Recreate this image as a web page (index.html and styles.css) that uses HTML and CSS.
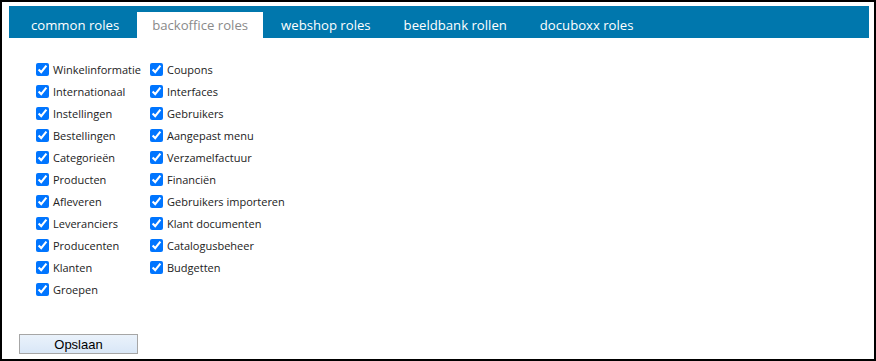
FILE: index.html
```html
<!DOCTYPE html>
<html lang="nl">
<head>
    <meta charset="UTF-8">
    <title>Rollen</title>
    <link rel="stylesheet" href="styles.css">
</head>
<body>
    <div class="frame">
        <!-- Tabs -->
        <div class="tab-bar">
            <div class="tab">common roles</div>
            <div class="tab active">backoffice roles</div>
            <div class="tab">webshop roles</div>
            <div class="tab">beeldbank rollen</div>
            <div class="tab">docuboxx roles</div>
        </div>

        <!-- Role list -->
        <div class="role-list">
            <div class="role-col first">
                <label class="role"><input type="checkbox" checked> Winkelinformatie</label>
                <label class="role"><input type="checkbox" checked> Internationaal</label>
                <label class="role"><input type="checkbox" checked> Instellingen</label>
                <label class="role"><input type="checkbox" checked> Bestellingen</label>
                <label class="role"><input type="checkbox" checked> Categorieën</label>
                <label class="role"><input type="checkbox" checked> Producten</label>
                <label class="role"><input type="checkbox" checked> Afleveren</label>
                <label class="role"><input type="checkbox" checked> Leveranciers</label>
                <label class="role"><input type="checkbox" checked> Producenten</label>
                <label class="role"><input type="checkbox" checked> Klanten</label>
                <label class="role"><input type="checkbox" checked> Groepen</label>
            </div>
            <div class="role-col">
                <label class="role"><input type="checkbox" checked> Coupons</label>
                <label class="role"><input type="checkbox" checked> Interfaces</label>
                <label class="role"><input type="checkbox" checked> Gebruikers</label>
                <label class="role"><input type="checkbox" checked> Aangepast menu</label>
                <label class="role"><input type="checkbox" checked> Verzamelfactuur</label>
                <label class="role"><input type="checkbox" checked> Financiën</label>
                <label class="role"><input type="checkbox" checked> Gebruikers importeren</label>
                <label class="role"><input type="checkbox" checked> Klant documenten</label>
                <label class="role"><input type="checkbox" checked> Catalogusbeheer</label>
                <label class="role"><input type="checkbox" checked> Budgetten</label>
            </div>
        </div>

        <button class="save-button">Opslaan</button>
    </div>
</body>
</html>
```

FILE: styles.css
```css
body {
    margin: 0;
    padding: 0;
    background: #ffffff;
    font-family: 'Open Sans', 'Noto Sans', sans-serif;
}

.frame {
    width: 876px;
    height: 361px;
    box-sizing: border-box;
    border: 2px solid #000000;
    padding: 4px 5px 0 7px;
}

.tab-bar {
    height: 32px;
    background: #0077ad;
    display: flex;
    align-items: flex-end;
    gap: 3px;
    padding-left: 7px;
}

.tab {
    height: 26px;
    padding: 0 15px;
    display: flex;
    align-items: center;
    color: #ffffff;
    font-size: 13.15px;
    white-space: nowrap;
}

.tab.active {
    background: #ffffff;
    color: #8a8a8a;
}

.role-list {
    display: flex;
    margin: 20px 0 0 27px;
}

.role-col {
    display: flex;
    flex-direction: column;
}

.role-col.first {
    width: 114px;
}

.role {
    height: 22px;
    display: flex;
    align-items: center;
    font-size: 11px;
    color: #222222;
    white-space: nowrap;
}

.role input {
    width: 13px;
    height: 13px;
    margin: 0 4px 0 0;
}

.save-button {
    display: block;
    margin: 34px 0 0 10px;
    width: 119px;
    height: 20px;
    padding: 0;
    border: 1px solid #a6a6a6;
    background: linear-gradient(#eaf2fb, #d9e7f7);
    font-family: 'Liberation Sans', Arial, sans-serif;
    font-size: 13px;
    color: #000000;
}
```
